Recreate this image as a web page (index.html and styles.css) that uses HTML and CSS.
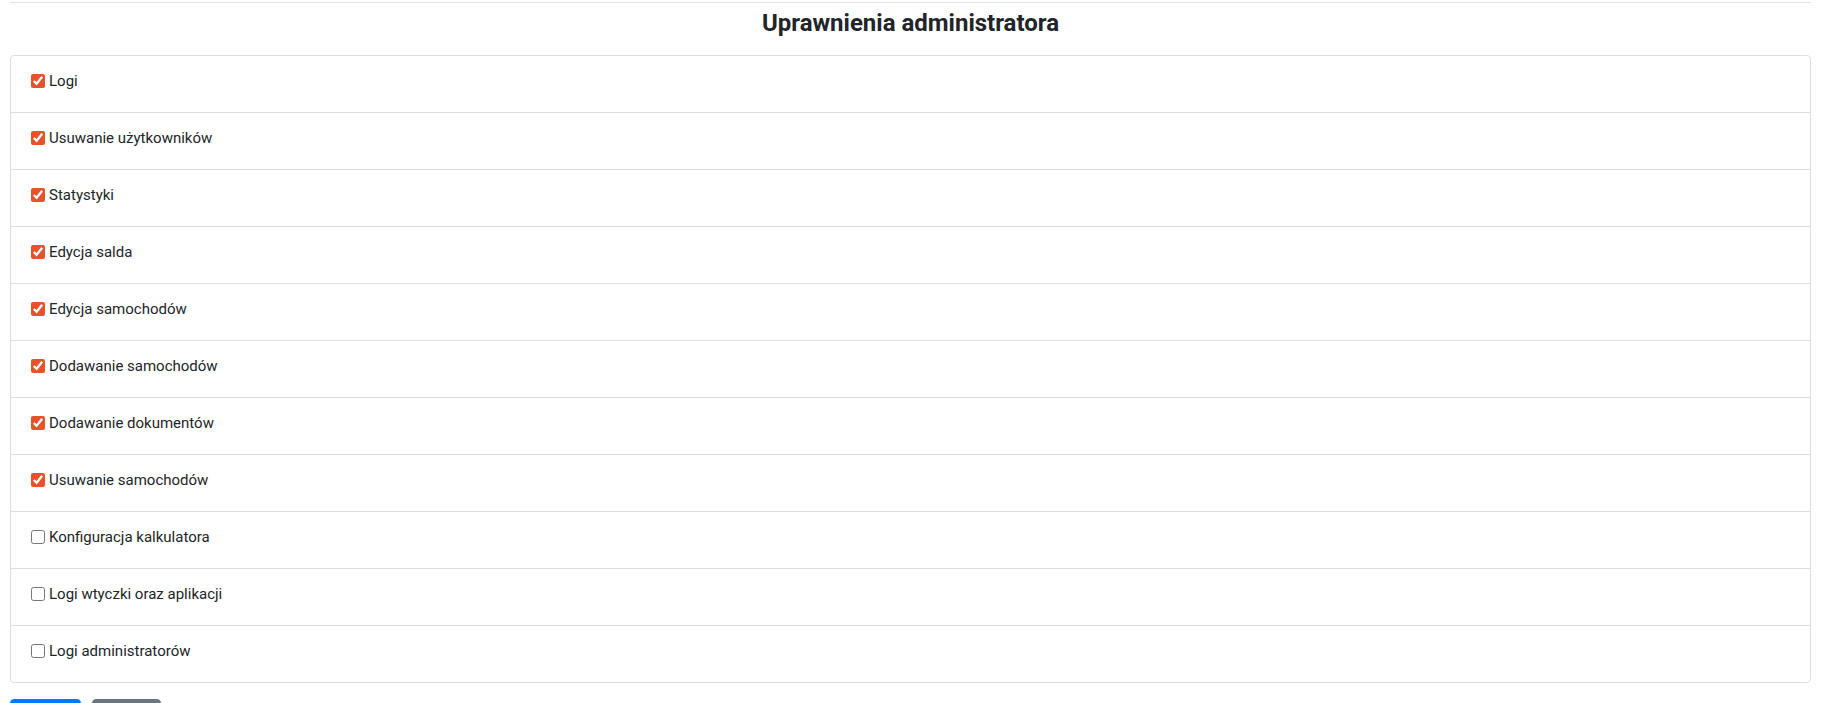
FILE: index.html
```html
<!DOCTYPE html>
<html lang="pl">

<head>
    <meta charset="UTF-8">
    <meta name="viewport" content="width=device-width, initial-scale=1.0">
    <title>Uprawnienia administratora</title>
    <link rel="stylesheet" href="styles.css">
</head>

<body>
    <div class="container">
        <hr class="line">
        <h2 class="title">Uprawnienia administratora</h2>

        <ul class="perm-list">
            <li class="perm-item"><label><input type="checkbox" checked><span>Logi</span></label></li>
            <li class="perm-item"><label><input type="checkbox" checked><span>Usuwanie użytkowników</span></label></li>
            <li class="perm-item"><label><input type="checkbox" checked><span>Statystyki</span></label></li>
            <li class="perm-item"><label><input type="checkbox" checked><span>Edycja salda</span></label></li>
            <li class="perm-item"><label><input type="checkbox" checked><span>Edycja samochodów</span></label></li>
            <li class="perm-item"><label><input type="checkbox" checked><span>Dodawanie samochodów</span></label></li>
            <li class="perm-item"><label><input type="checkbox" checked><span>Dodawanie dokumentów</span></label></li>
            <li class="perm-item"><label><input type="checkbox" checked><span>Usuwanie samochodów</span></label></li>
            <li class="perm-item"><label><input type="checkbox"><span>Konfiguracja kalkulatora</span></label></li>
            <li class="perm-item"><label><input type="checkbox"><span>Logi wtyczki oraz aplikacji</span></label></li>
            <li class="perm-item"><label><input type="checkbox"><span>Logi administratorów</span></label></li>
        </ul>

        <div class="actions">
            <button class="btn btn-primary" type="submit">Zapisz</button>
            <button class="btn btn-secondary" type="button">Anuluj</button>
        </div>
    </div>
</body>

</html>
```

FILE: styles.css
```css
body {
    margin: 0;
    font-family: Roboto, "Liberation Sans", sans-serif;
    color: #212529;
    background-color: #fff;
}

.container {
    padding: 0 10px;
}

.line {
    margin: 2px 0 0;
    border: none;
    border-top: 1px solid #e2e1ec;
}

.title {
    margin: 5px 0 17px;
    font-size: 24px;
    font-weight: 700;
    line-height: 30px;
    text-align: center;
}

.perm-list {
    list-style: none;
    margin: 0;
    padding: 0;
    border: 1px solid #dedede;
    border-radius: 4px;
}

.perm-item {
    padding: 13px 20px 19px;
    border-bottom: 1px solid #dedede;
    font-size: 15px;
    line-height: 24px;
}

.perm-item:last-child {
    border-bottom: none;
}

.perm-item label {
    display: flex;
    align-items: center;
}

.perm-item input {
    width: 14px;
    height: 14px;
    margin: 0 4px 0 0;
    accent-color: #e6522c;
}

.actions {
    display: flex;
    gap: 11px;
    margin-top: 16px;
}

.btn {
    padding: 6px 12px;
    border: 1px solid transparent;
    border-radius: 4px;
    color: #fff;
    font-family: inherit;
    font-size: 14px;
    line-height: 20px;
    cursor: pointer;
}

.btn-primary {
    background-color: #007bff;
    border-color: #007bff;
    min-width: 71px;
}

.btn-secondary {
    background-color: #6c757d;
    border-color: #6c757d;
    min-width: 69px;
}
```
